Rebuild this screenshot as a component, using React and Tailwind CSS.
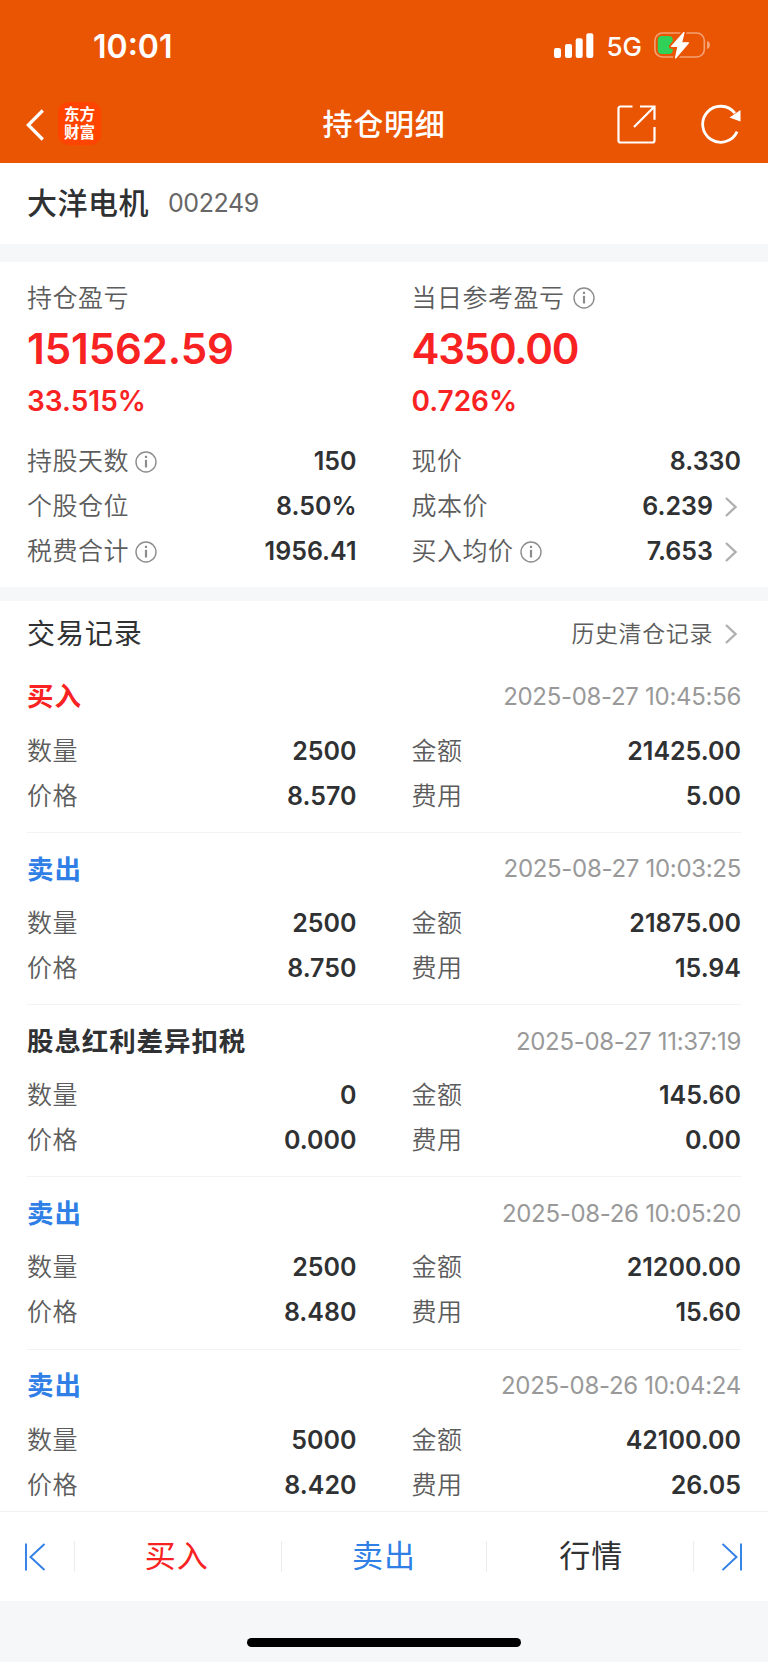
const summary = [
  [
    { label: "持股天数", info: true, value: "150" },
    { label: "现价", value: "8.330" },
  ],
  [
    { label: "个股仓位", value: "8.50%" },
    { label: "成本价", value: "6.239", link: true },
  ],
  [
    { label: "税费合计", info: true, value: "1956.41" },
    { label: "买入均价", info: true, value: "7.653", link: true },
  ],
];

const records = [
  { type: "买入", color: "text-[#f82222]", time: "2025-08-27 10:45:56", count: "2500", amount: "21425.00", price: "8.570", fee: "5.00" },
  { type: "卖出", color: "text-[#2f7fe6]", time: "2025-08-27 10:03:25", count: "2500", amount: "21875.00", price: "8.750", fee: "15.94" },
  { type: "股息红利差异扣税", color: "text-[#303133]", time: "2025-08-27 11:37:19", count: "0", amount: "145.60", price: "0.000", fee: "0.00" },
  { type: "卖出", color: "text-[#2f7fe6]", time: "2025-08-26 10:05:20", count: "2500", amount: "21200.00", price: "8.480", fee: "15.60" },
  { type: "卖出", color: "text-[#2f7fe6]", time: "2025-08-26 10:04:24", count: "5000", amount: "42100.00", price: "8.420", fee: "26.05" },
];

const InfoIcon = () => (
  <svg className="w-[22px] h-[22px] shrink-0" viewBox="0 0 22 22" fill="none" stroke="#8c8c8c">
    <circle cx="11" cy="11" r="10" strokeWidth="1.4" />
    <path d="M11 8.800v7.700" strokeWidth="2.200" />
    <path d="M11 4.800v2.200" strokeWidth="2.200" />
  </svg>
);

const Chevron = () => (
  <svg className="w-3 h-5 ml-3 mr-1 shrink-0" viewBox="0 0 12 20" fill="none" stroke="#b0b0b0" strokeWidth="2.400">
    <path d="M1 1l9.500 9L1 19" />
  </svg>
);

const Field = ({ label, info, value, link }) => (
  <div className="flex items-center h-[45px]">
    <span className="text-[25px] tracking-[0.5px] font-[350] text-[#5c5c5c]">{label}</span>
    {info && (
      <span className="ml-1.5">
        <InfoIcon />
      </span>
    )}
    <span className="ml-auto text-[25px] font-semibold text-[#303133]">{value}</span>
    {link && <Chevron />}
  </div>
);

const StatusBar = () => (
  <div className="flex items-center h-[92px] pl-[93px] pr-[57px] text-white">
    <span className="mt-[2px] text-[32px] font-semibold">10:01</span>
    <svg className="w-[40px] h-[26px] ml-auto" viewBox="0 0 40 26" fill="#fff">
      <rect x="0" y="15" width="7" height="10" rx="2" />
      <rect x="11" y="11" width="7" height="14" rx="2" />
      <rect x="21.7" y="5.3" width="7" height="19.7" rx="2" />
      <rect x="32.3" y="0.2" width="7" height="24.8" rx="2" />
    </svg>
    <span className="ml-3 mt-[1px] text-[26px] font-[450]">5G</span>
    <svg className="w-[57px] h-[28px] ml-3 mb-[2px]" viewBox="0 0 57 28" fill="none">
      <rect x="0.9" y="2" width="49.4" height="24" rx="7.5" stroke="#fff" strokeOpacity="0.45" strokeWidth="1.6" />
      <path d="M53 10c2 .5 3 2.200 3 4s-1 3.500-3 4z" fill="#fff" fillOpacity="0.45" />
      <rect x="3.8" y="5" width="15" height="18" rx="4" fill="#30d158" />
      <path
        d="M30 1.500L17.500 15.500h6.500l-2.500 11.500L34.500 11.800h-7z"
        fill="#ea5504"
        stroke="#ea5504"
        strokeWidth="5"
        strokeLinejoin="round"
      />
      <path
        d="M30 1.500L17.500 15.500h6.500l-2.500 11.500L34.500 11.800h-7z"
        fill="#fff"
        stroke="#fff"
        strokeWidth="1.200"
        strokeLinejoin="round"
      />
    </svg>
  </div>
);

const NavBar = () => (
  <div className="grid grid-cols-[1fr_auto_1fr] items-center h-[71px] px-[26px] pb-[6px] text-white">
    <div className="flex items-center">
      <svg className="w-[18px] h-[32px]" viewBox="0 0 18 32" fill="none" stroke="#fff" strokeWidth="3.200">
        <path d="M16.800 1.500L2.300 16l14.500 14.500" />
      </svg>
      <div className="flex flex-col justify-center items-center w-[43px] h-[43px] ml-[14px] mb-0.5 rounded-[10px] bg-[#ff4400] text-[15.500px] leading-[18px] font-bold">
        <span>东方</span>
        <span>财富</span>
      </div>
    </div>
    <h1 className="-mt-[2px] text-[30px] tracking-[0.8px] font-medium">持仓明细</h1>
    <div className="flex items-center justify-end gap-[45px]">
      <svg className="w-[39px] h-[39px]" viewBox="0 0 39 39" fill="none" stroke="#fff" strokeWidth="2.200">
        <path d="M15.500 1.500H3.500a2 2 0 0 0-2 2v32a2 2 0 0 0 2 2h32a2 2 0 0 0 2-2V22" />
        <path d="M23 1.500h14.500V14.800M37 2L17 22" />
      </svg>
      <svg className="w-[41px] h-[41px]" viewBox="0 0 41 41" fill="none">
        <path d="M36.100 27.600A18 18 0 1 1 33.900 9.200" stroke="#fff" strokeWidth="2.800" />
        <path d="M39.500 6v11.500l-11-4z" fill="#fff" />
      </svg>
    </div>
  </div>
);

const Profit = ({ label, info, value, percent, tracking }) => (
  <div>
    <div className="flex items-center h-10 text-[25px] tracking-[0.5px] font-[350] text-[#5c5c5c]">
      {label}
      {info && (
        <span className="ml-2">
          <InfoIcon />
        </span>
      )}
    </div>
    <div className={`flex items-center h-[61px] text-[42px] font-semibold text-[#f82222] ${tracking}`}>{value}</div>
    <div className="flex items-center h-[43px] mb-[1px] text-[28px] font-semibold text-[#f82222]">{percent}</div>
  </div>
);

const Record = ({ record }) => (
  <div className="h-[172.250px] pt-1 border-b border-[#f2f3f5]">
    <div className="flex items-center justify-between h-16">
      <span className={`text-[26.500px] tracking-[0.9px] font-bold ${record.color}`}>{record.type}</span>
      <span className="mt-[1px] text-[24px] tracking-[-0.3px] text-[#999]">{record.time}</span>
    </div>
    <div className="grid grid-cols-2 gap-x-[55px]">
      <Field label="数量" value={record.count} />
      <Field label="金额" value={record.amount} />
      <Field label="价格" value={record.price} />
      <Field label="费用" value={record.fee} />
    </div>
  </div>
);

const Divider = () => <div className="w-px h-[31px] bg-[#ebecee]" />;

const App = () => {
  return (
    <div className="flex flex-col w-[768px] h-[1662px] overflow-hidden bg-[#f6f7f9] font-['Inter','Noto_Sans_CJK_SC',sans-serif] leading-none">
      <header className="h-[163px] shrink-0 bg-[#ea5504]">
        <StatusBar />
        <NavBar />
      </header>

      <section className="flex items-center h-[81px] shrink-0 px-[27px] bg-white">
        <h2 className="-mt-[2px] text-[30px] tracking-[0.5px] font-medium text-[#303133]">大洋电机</h2>
        <span className="ml-[19px] text-[25px] tracking-[-0.4px] text-[#666]">002249</span>
      </section>

      <section className="h-[325px] shrink-0 mt-[18px] px-[27px] pt-4 bg-white">
        <div className="grid grid-cols-2 gap-x-[55px]">
          <Profit label="持仓盈亏" value="151562.59" percent="33.515%" tracking="tracking-[-0.1px]" />
          <Profit label="当日参考盈亏" info value="4350.00" percent="0.726%" tracking="tracking-[-1.2px]" />
        </div>
        <div className="grid grid-cols-2 gap-x-[55px] mt-4">
          {summary.flat().map((item) => (
            <Field key={item.label} {...item} />
          ))}
        </div>
      </section>

      <section className="flex-1 min-h-0 mt-3.5 px-[27px] overflow-hidden bg-white">
        <div className="flex items-center justify-between h-[59.500px] pt-[7px]">
          <h3 className="text-[28px] tracking-[0.9px] text-[#303133]">交易记录</h3>
          <div className="flex items-center text-[23px] tracking-[0.6px] font-[350] text-[#5c5c5c]">
            历史清仓记录
            <Chevron />
          </div>
        </div>
        {records.map((record) => (
          <Record key={record.time} record={record} />
        ))}
      </section>

      <footer className="flex items-center h-[90px] shrink-0 border-t border-[#f0f1f3] bg-white text-[31px] tracking-[1px]">
        <div className="w-[74px] pl-6">
          <svg className="w-[22px] h-[28px]" viewBox="0 0 22 28" fill="none" stroke="#2f7fe6" strokeWidth="1.900">
            <path d="M2 0.500v27M20.500 1L6.500 14l14 13" />
          </svg>
        </div>
        <Divider />
        <span className="flex-1 -mt-[2px] pr-[3px] text-center text-[#f82222]">买入</span>
        <Divider />
        <span className="flex-1 -mt-[2px] text-center text-[#2f7fe6]">卖出</span>
        <Divider />
        <span className="flex-1 -mt-[2px] pl-[3px] text-center text-[#303133]">行情</span>
        <Divider />
        <div className="w-[74px] pl-7">
          <svg className="w-[22px] h-[28px]" viewBox="0 0 22 28" fill="none" stroke="#2f7fe6" strokeWidth="1.900">
            <path d="M19 0.500v27M0.500 1l14 13-14 13" />
          </svg>
        </div>
      </footer>

      <div className="flex justify-center h-[61px] shrink-0 pt-[37px]">
        <div className="w-[274px] h-[9px] rounded-full bg-black" />
      </div>
    </div>
  );
};

export default App;
